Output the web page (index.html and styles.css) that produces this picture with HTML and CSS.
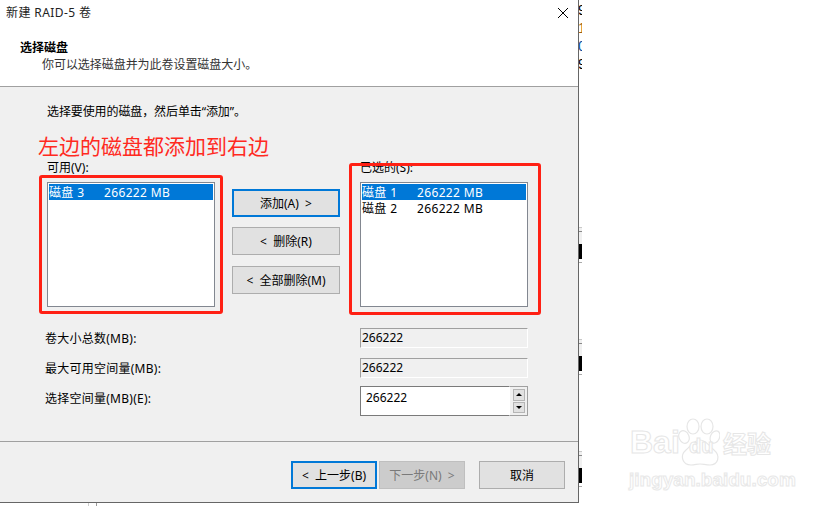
FILE: index.html
```html
<!DOCTYPE html>
<html lang="zh-CN">
<head>
<meta charset="utf-8">
<title>新建 RAID-5 卷</title>
<link rel="stylesheet" href="styles.css">
</head>
<body>
<div class="page">
  <div class="left">
    <div class="dialog">
      <div class="titlebar">
        <span>新建 RAID-5 卷</span>
        <svg class="close" width="10" height="10" viewBox="0 0 10 10"><path d="M0 0L10 10M10 0L0 10" stroke="#000" stroke-width="1" fill="none"/></svg>
      </div>
      <div class="header">
        <div class="heading">选择磁盘</div>
        <div class="subheading">你可以选择磁盘并为此卷设置磁盘大小。</div>
      </div>
      <div class="body">
        <div class="instruction">选择要使用的磁盘，然后单击“添加”。</div>
        <div class="picker">
          <div class="column">
            <div class="list-label">可用(V):</div>
            <div class="listbox">
              <div class="row selected"><span class="disk">磁盘 3</span><span>266222 MB</span></div>
            </div>
          </div>
          <div class="actions">
            <div class="btn focus">添加(A)  &gt;</div>
            <div class="btn">&lt;  删除(R)</div>
            <div class="btn last">&lt;  全部删除(M)</div>
          </div>
          <div class="column">
            <div class="list-label">已选的(S):</div>
            <div class="listbox">
              <div class="row selected"><span class="disk">磁盘 1</span><span>266222 MB</span></div>
              <div class="row"><span class="disk">磁盘 2</span><span>266222 MB</span></div>
            </div>
          </div>
        </div>
        <div class="fields">
          <div class="field-row">
            <div class="field-label">卷大小总数(MB):</div>
            <div class="readonly">266222</div>
          </div>
          <div class="field-row">
            <div class="field-label">最大可用空间量(MB):</div>
            <div class="readonly">266222</div>
          </div>
          <div class="field-row spin-row">
            <div class="field-label">选择空间量(MB)(E):</div>
            <div class="spinner">
              <div class="spin-input">266222</div>
              <div class="spin-buttons">
                <div class="spin-btn"><svg width="6" height="3" viewBox="0 0 6 3"><path d="M3 0L6 3H0Z" fill="#000"/></svg></div>
                <div class="spin-btn"><svg width="6" height="3" viewBox="0 0 6 3"><path d="M0 0H6L3 3Z" fill="#000"/></svg></div>
              </div>
            </div>
          </div>
        </div>
        <div class="note">左边的磁盘都添加到右边</div>
        <div class="mark mark-left"></div>
        <div class="mark mark-right"></div>
      </div>
      <div class="footer">
        <div class="btn wide focus">&lt;  上一步(B)</div>
        <div class="btn wide disabled">下一步(N)  &gt;</div>
        <div class="btn wide cancel">取消</div>
      </div>
    </div>
    <div class="under"></div>
  </div>
  <div class="behind">
    <div class="behind-text">
      <span class="c1">9</span><span class="c2">1</span><span class="c3">0</span><span class="c1">9</span>
    </div>
    <div class="behind-cell first"><b></b><i></i><u></u></div>
    <div class="behind-cell"><b></b><i></i><u></u></div>
    <div class="behind-cell"><b></b><i></i><u></u></div>
  </div>
  <div class="watermark">
    <svg class="paw" width="42" height="48" viewBox="0 0 42 48" fill="#fff" stroke="#e6e6e6" stroke-width="1.2">
      <ellipse cx="6" cy="19" rx="5" ry="6.500" transform="rotate(-25 6 19)"/>
      <ellipse cx="15" cy="8.500" rx="6" ry="7.500"/>
      <ellipse cx="29" cy="8.500" rx="6" ry="7.500"/>
      <ellipse cx="37" cy="19" rx="4.500" ry="6.500" transform="rotate(25 37 19)"/>
      <path d="M22 22C16 22 13 28 8 32C1 38 5 47 13 47C17 47 19 46 22 46C25 46 28 47 32 47C40 47 43 38 36 32C31 28 28 22 22 22Z"/>
    </svg>
    <div class="wm-line"><span class="wm-bai">Bai</span><span class="wm-du">du</span><span class="wm-cn">经验</span></div>
    <div class="wm-url">jingyan.baidu.com</div>
  </div>
</div>
</body>
</html>
```

FILE: styles.css
```css
* { box-sizing: border-box; }
html, body { margin: 0; padding: 0; background: #fff; }
body { width: 819px; height: 506px; overflow: hidden; font: 12px/16px "Noto Sans", "Noto Sans CJK SC", sans-serif; color: #000; }
.page { position: relative; display: flex; width: 819px; height: 506px; }
.left { display: flex; flex-direction: column; width: 579px; flex: none; }
.dialog { display: flex; flex-direction: column; width: 579px; height: 503px; flex: none; background: #fff; border-right: 1px solid #666; border-bottom: 1px solid #666; }
.under { width: 9px; height: 3px; margin-left: 88px; border-left: 1px solid #ccc; border-right: 1px solid #999; }
.titlebar { display: flex; align-items: center; justify-content: space-between; height: 26px; padding: 0 10px 0 6px; flex: none; color: #222; letter-spacing: .4px; }
.header { height: 61px; flex: none; border-bottom: 1px solid #a0a0a0; padding: 14px 0 0 20px; }
.heading { font-weight: 700; line-height: 16px; }
.subheading { padding-left: 22px; margin-top: 1px; color: #333; line-height: 16px; letter-spacing: -.05px; }
.body { position: relative; height: 355px; flex: none; background: #f0f0f0; border-bottom: 1px solid #a0a0a0; padding: 17px 0 0 45px; }
.instruction { padding-left: 2px; line-height: 16px; letter-spacing: -.1px; }
.picker { display: grid; grid-template-columns: 185px 128px 168px; margin: 39px 0 0 2px; height: 148px; }
.list-label { line-height: 18px; height: 23px; }
.listbox { width: 168px; height: 125px; background: #fff; border: 1px solid #828790; padding: 1px; }
.row { display: flex; height: 16px; line-height: 18px; white-space: nowrap; letter-spacing: .35px; }
.disk { width: 55px; flex: none; }
.selected { background: #0078d7; color: #fff; }
.actions { display: flex; flex-direction: column; gap: 10px; padding-top: 30px; width: 108px; }
.btn { display: flex; align-items: center; justify-content: center; height: 28px; width: 108px; flex: none; padding-top: 1px; background: #e1e1e1; border: 1px solid #adadad; white-space: pre; }
.btn.focus { border: 2px solid #0078d7; }
.btn.last { margin-top: 1px; }
.fields { display: flex; flex-direction: column; margin-top: 21px; }
.field-row { display: flex; align-items: center; height: 20px; margin-bottom: 10px; }
.spin-row { height: 30px; margin-top: -2px; margin-bottom: 0; align-items: flex-start; }
.spin-row .field-label { padding-top: 5px; }
.field-label { width: 315px; flex: none; padding-top: 1px; letter-spacing: .25px; }
.readonly { width: 168px; height: 20px; padding-left: 1px; line-height: 18px; background: #f0f0f0; border: 1px solid; border-color: #a0a0a0 #fff #fff #a0a0a0; }
.spinner { display: flex; width: 168px; height: 30px; }
.spin-input { width: 150px; height: 30px; padding: 3px 0 0 5px; background: #fff; border: 1px solid; border-color: #7a7a7a #fff #7a7a7a #7a7a7a; }
.spin-buttons { display: flex; flex-direction: column; gap: 1px; width: 18px; height: 30px; padding: 2px 2px 2px 3px; border: 1px solid #a0a0a0; border-left: 0; }
.spin-btn { display: flex; align-items: center; justify-content: center; height: 12px; background: #e1e1e1; border: 1px solid #b5b5b5; }
.note { position: absolute; left: 38px; top: 48px; font-size: 21px; line-height: 22px; color: #ff2a1f; white-space: nowrap; }
.mark { position: absolute; border: 3px solid #ff2014; border-radius: 3px; }
.mark-left { left: 39px; top: 88px; width: 184px; height: 139px; }
.mark-right { left: 349px; top: 76px; width: 192px; height: 152px; }
.footer { display: flex; align-items: flex-start; height: 60px; flex: none; background: #f0f0f0; padding: 19px 0 0 291px; }
.btn.wide { width: 86px; }
.btn.wide.disabled { background: #ccc; color: #7a7a7a; border-color: #bfbfbf; margin-left: 2px; }
.btn.wide.cancel { margin-left: 14px; }
.behind { width: 3px; height: 506px; flex: none; overflow: hidden; }
.behind-text { display: flex; flex-direction: column; padding-top: 1px; font: 14px/18px "Liberation Sans", sans-serif; }
.behind-text span { display: block; height: 18px; margin-left: -1px; }
.c1 { color: #000; }
.c2 { color: #a06010; }
.c3 { color: #0a4fa0; }
.behind-cell { height: 112px; border-top: 1px solid #c8c8c8; background: linear-gradient(#f0f0f0 17px, #fff 17px); }
.behind-cell b { display: block; height: 1px; margin-top: 3px; background: #888; }
.behind-cell i { display: block; height: 15px; margin-top: 12px; background: #000; }
.behind-cell u { display: block; height: 1px; margin-top: 3px; background: #aaa; }
.behind-cell.first { margin-top: 154px; }
.watermark { position: absolute; left: 630px; top: 418px; width: 146px; }
.paw { position: absolute; left: 48px; top: 0; }
.wm-line { position: relative; display: flex; align-items: baseline; height: 52px; padding-top: 6px; font: 700 32px/36px "Liberation Sans", sans-serif; color: #fff; -webkit-text-stroke: 1px #e6e6e6; }
.wm-bai { width: 59px; }
.wm-du { width: 34px; font-size: 20px; }
.wm-cn { font: 700 24px/36px "Noto Sans CJK SC", sans-serif; }
.wm-url { margin-left: -1px; font: 700 19px/20px "Liberation Sans", sans-serif; color: #fff; -webkit-text-stroke: 1px #e8e8e8; white-space: nowrap; }
```
